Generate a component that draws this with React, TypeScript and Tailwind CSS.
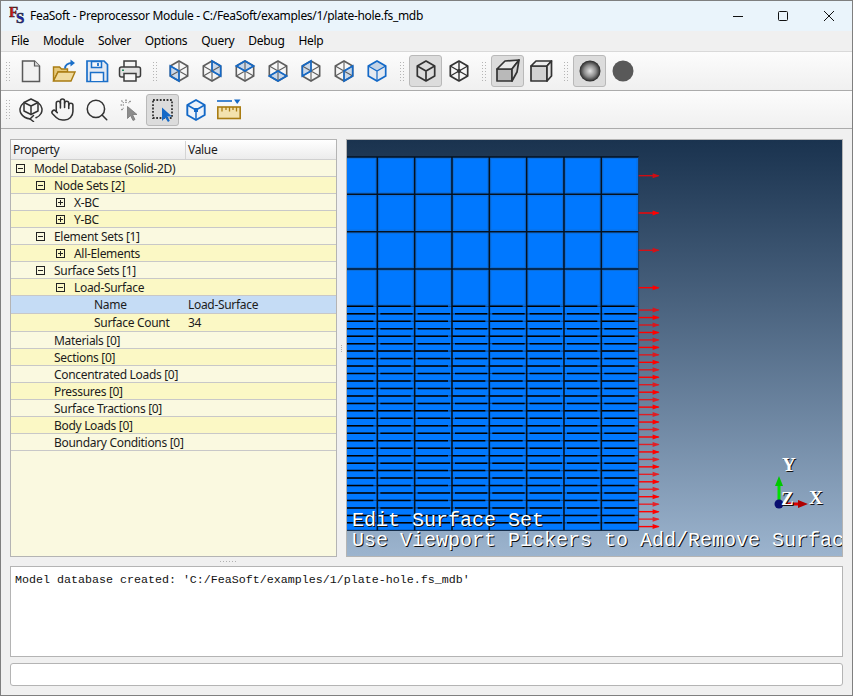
import type { ReactNode } from 'react'
import { Hand, Search } from 'lucide-react'

const UI_FONT = "font-['Noto_Sans','Liberation_Sans',sans-serif] tracking-[-0.31px]"

// hexagon corners of the view cube icons
const V: Record<string, string> = {
  t: '12,2',
  ur: '20.7,7',
  lr: '20.7,17',
  b: '12,22',
  ll: '3.3,17',
  ul: '3.3,7',
  c: '12,12',
}
const pts = (keys: string[]) => keys.map((k) => V[k]).join(' ')

const HEX_FACES = [
  ['c', 'ul', 'll', 'b'],
  ['t', 'ur', 'lr', 'c'],
  ['ul', 't', 'ur', 'c'],
  ['ll', 'b', 'lr', 'c'],
  ['ul', 't', 'c', 'll'],
  ['c', 'ur', 'lr', 'b'],
]

function HexIcon({ face }: { face: number }) {
  const outer = ['t', 'ur', 'lr', 'b', 'll', 'ul']
  if (face === 6) {
    return (
      <svg width="24" height="24" viewBox="0 0 24 24" fill="none">
        <polygon points={pts(outer)} fill="#e4e9f0" />
        <polygon points={pts(['ul', 't', 'ur', 'c'])} fill="#c3d3e6" />
        <polygon points={pts(outer)} stroke="#1469c7" strokeWidth="1.7" />
        <path d="M3.3 7 12 12 20.7 7M12 12v10" stroke="#1469c7" strokeWidth="1.2" />
      </svg>
    )
  }
  return (
    <svg width="24" height="24" viewBox="0 0 24 24" fill="none">
      <polygon points={pts(HEX_FACES[face])} fill="#c9d8ea" />
      <polygon points={pts(outer)} stroke="#5e5e5e" strokeWidth="1.6" />
      <path d="M12 2v20M3.3 7l17.4 10M20.7 7 3.3 17" stroke="#5e5e5e" strokeWidth="1.1" />
      <polygon points={pts(HEX_FACES[face])} stroke="#1469c7" strokeWidth="1.6" />
    </svg>
  )
}

function NewIcon() {
  return (
    <svg width="24" height="24" viewBox="0 0 24 24" fill="none">
      <path d="M3.5 2h12l5 5v15.5h-17z" fill="#f1f1f1" stroke="#595959" strokeWidth="1.5" />
      <path d="M15.5 2v5h5" fill="#dcdcdc" stroke="#595959" strokeWidth="1.2" />
    </svg>
  )
}

function OpenIcon() {
  return (
    <svg width="24" height="24" viewBox="0 0 24 24" fill="none">
      <path d="M1.5 22V8h6l2 2h6v3H6L1.5 22z" fill="#e6c878" stroke="#a97c12" strokeWidth="1.4" />
      <path d="M1.5 22 6 13h17l-4 9z" fill="#f0dba0" stroke="#a97c12" strokeWidth="1.4" />
      <path d="M13 9.5c0-3.5 3-5.5 7-5.5" stroke="#1a6fc9" strokeWidth="2" />
      <path d="M18.5 0.5 23 4l-4.5 3.5z" fill="#1a6fc9" />
    </svg>
  )
}

function SaveIcon() {
  return (
    <svg width="24" height="24" viewBox="0 0 24 24" fill="none">
      <path d="M2 2h17l3.5 3.5V22.5H2z" fill="#e3e9f2" stroke="#1a6fc9" strokeWidth="1.7" />
      <path d="M6.5 2.5h10v6h-10zM5.5 22v-8.5h13V22" fill="#f4f6fa" stroke="#1a6fc9" strokeWidth="1.5" />
      <path d="M13 4v3" stroke="#1a6fc9" strokeWidth="1.8" />
    </svg>
  )
}

function PrintIcon() {
  return (
    <svg width="24" height="24" viewBox="0 0 24 24" fill="none">
      <path d="M6 8V2h12v6" fill="#f4f4f4" stroke="#3d3d3d" strokeWidth="1.5" />
      <rect x="1.5" y="8" width="21" height="10" rx="2" fill="#e2e2e2" stroke="#3d3d3d" strokeWidth="1.5" />
      <rect x="6" y="14.5" width="12" height="7.5" fill="#f7f7f7" stroke="#3d3d3d" strokeWidth="1.5" />
      <rect x="4" y="10.5" width="2" height="1.5" fill="#1e8a5a" />
    </svg>
  )
}

function CubeIcon() {
  return (
    <svg width="24" height="24" viewBox="0 0 24 24" fill="none" stroke="#333" strokeWidth="1.7" strokeLinejoin="round">
      <polygon points={pts(['t', 'ur', 'lr', 'b', 'll', 'ul'])} />
      <path d="M3.3 7 12 12 20.7 7M12 12v10" />
    </svg>
  )
}

function WireIcon() {
  return (
    <svg width="24" height="24" viewBox="0 0 24 24" fill="none" stroke="#333" strokeWidth="1.7" strokeLinejoin="round">
      <polygon points={pts(['t', 'ur', 'lr', 'b', 'll', 'ul'])} />
      <path d="M12 2v20M3.3 7l17.4 10M20.7 7 3.3 17" strokeWidth="1.4" />
      <circle cx="12" cy="12" r="2" fill="#333" stroke="none" />
    </svg>
  )
}

function PerspectiveIcon() {
  return (
    <svg width="24" height="24" viewBox="0 0 24 24" fill="none" stroke="#333" strokeWidth="1.7" strokeLinejoin="round">
      <polygon points="1,10 16,10 16,22 1,22" fill="#b9b9b9" />
      <polygon points="1,10 9,2 23,1 16,10" fill="#e8e8e8" />
      <polygon points="16,10 23,1 21,13 16,22" fill="#d4d4d4" />
    </svg>
  )
}

function OrthoIcon() {
  return (
    <svg width="24" height="24" viewBox="0 0 24 24" fill="none" stroke="#333" strokeWidth="1.7" strokeLinejoin="round">
      <polygon points="2,7 18,7 18,22 2,22" fill="#d2d2d2" />
      <polygon points="2,7 7,2 22.5,2 18,7" fill="#ececec" />
      <polygon points="18,7 22.5,2 22.5,17 18,22" fill="#e2e2e2" />
    </svg>
  )
}

function ShadedIcon() {
  return (
    <svg width="24" height="24" viewBox="0 0 24 24">
      <defs>
        <radialGradient id="ball" cx="50%" cy="50%" r="52%">
          <stop offset="0%" stopColor="#e4e4e4" />
          <stop offset="55%" stopColor="#8a8a8a" />
          <stop offset="100%" stopColor="#1d1d1d" />
        </radialGradient>
      </defs>
      <circle cx="12" cy="12" r="10.5" fill="url(#ball)" />
    </svg>
  )
}

function FlatIcon() {
  return (
    <svg width="24" height="24" viewBox="0 0 24 24">
      <circle cx="12" cy="12" r="10.5" fill="#595959" />
    </svg>
  )
}

function RotateIcon() {
  return (
    <svg width="24" height="24" viewBox="0 0 24 24" fill="none" stroke="#333" strokeWidth="1.5" strokeLinejoin="round" strokeLinecap="round">
      <path d="M12 1 19 4.5v8.5l-7 3.5-7-3.5V4.5z" />
      <path d="M5 4.5l7 3.5 7-3.5M12 8v8.5" />
      <path d="M4 5.5C.8 8 .2 12.5 2 15.5c1.6 2.8 5 5 9.5 5.5" />
      <path d="M20 5.5c3.2 2.5 3.8 7 2 10-1 1.9-2.8 3.4-5 4.3" />
      <path d="M14.5 17.5 11 21l3.5 2.5" />
    </svg>
  )
}

function PickIcon() {
  return (
    <svg width="24" height="24" viewBox="0 0 24 24" fill="none">
      <path d="M9.5 8.5v12l3-3 2.5 5 2-1-2.5-5h4.5z" fill="#8c8c8c" stroke="#777" strokeWidth="0.8" />
      <path d="M8 1.5v3.5M2.5 7H6M12.5 3 10.5 5M3.5 2.5l2 2.5M3.5 12l2-2" stroke="#6e6e6e" strokeWidth="1.2" strokeDasharray="1.5 0.8" />
    </svg>
  )
}

function BoxSelectIcon() {
  return (
    <svg width="24" height="24" viewBox="0 0 24 24" fill="none">
      <rect x="2" y="2" width="19" height="18" stroke="#333" strokeWidth="1.8" strokeDasharray="1.8 1.6" />
      <path d="M11 9.5v13.5l3.2-3.2 2.8 4.2 1.8-1.2-2.5-4.2h4.7z" fill="#1469c7" />
    </svg>
  )
}

function SelCubeIcon() {
  return (
    <svg width="24" height="24" viewBox="0 0 24 24" fill="none" stroke="#1469c7" strokeWidth="1.9" strokeLinejoin="round">
      <polygon points={pts(['t', 'ur', 'lr', 'b', 'll', 'ul'])} fill="#eef3fa" />
      <path d="M3.3 7 12 12 20.7 7M12 12v10" strokeWidth="1.5" />
      <rect x="10" y="10" width="4" height="4" fill="#1469c7" stroke="none" />
    </svg>
  )
}

function RulerIcon() {
  return (
    <svg width="24" height="24" viewBox="0 0 24 24" fill="none">
      <path d="M0 3h15" stroke="#1469c7" strokeWidth="1.6" />
      <path d="M17 1.5h6.5L20.2 6z" fill="#1469c7" />
      <rect x="0.8" y="9" width="22.4" height="11.5" fill="#f3e2ae" stroke="#a97c12" strokeWidth="1.6" />
      <path d="M5 9v4.5M9 9v3M12.5 9v4.5M16 9v3M19.5 9v4.5" stroke="#a97c12" strokeWidth="1.3" />
    </svg>
  )
}

function Grip({ first }: { first?: boolean }) {
  const dots = [0, 1, 2, 3, 4, 5, 6]
  return (
    <div className={first ? 'flex h-full w-[13px] items-center gap-[2px] pl-[5px]' : 'flex h-full w-[16px] items-center gap-[2px] pl-[7px]'}>
      {[0, 1].map((col) => (
        <div key={col} className="flex flex-col gap-[2px]">
          {dots.map((d) => (
            <div key={d} className="h-px w-px bg-[#b5b5b5]" />
          ))}
        </div>
      ))}
    </div>
  )
}

function ToolButton({ children, active }: { children: ReactNode; active?: boolean }) {
  return (
    <div
      className={
        active
          ? 'flex h-[32px] w-[33px] items-center justify-center rounded-[3px] border border-[#b9b9b9] bg-[#dcdcdc]'
          : 'flex h-[32px] w-[33px] items-center justify-center'
      }
    >
      {children}
    </div>
  )
}

function Toolbar({ children, height }: { children: ReactNode; height: string }) {
  return (
    <div className={`flex shrink-0 items-center border-b border-[#ababab] bg-linear-to-b from-[#fcfcfc] to-[#f0f0f0] ${height}`}>
      {children}
    </div>
  )
}

function Expander({ open }: { open: boolean }) {
  return (
    <svg width="9" height="9" viewBox="0 0 9 9" className="shrink-0">
      <rect x="0.5" y="0.5" width="8" height="8" fill="none" stroke="#222" />
      <path d={open ? 'M2 4.5h5' : 'M2 4.5h5M4.5 2v5'} stroke="#222" />
    </svg>
  )
}

type TreeRow = {
  label: string
  level: number
  open?: boolean
  value?: string
  tall?: boolean
  selected?: boolean
}

const ROWS: TreeRow[] = [
  { label: 'Model Database (Solid-2D)', level: 0, open: true },
  { label: 'Node Sets [2]', level: 1, open: true },
  { label: 'X-BC', level: 2, open: false },
  { label: 'Y-BC', level: 2, open: false },
  { label: 'Element Sets [1]', level: 1, open: true },
  { label: 'All-Elements', level: 2, open: false },
  { label: 'Surface Sets [1]', level: 1, open: true },
  { label: 'Load-Surface', level: 2, open: true },
  { label: 'Name', level: 3, value: 'Load-Surface', tall: true, selected: true },
  { label: 'Surface Count', level: 3, value: '34', tall: true },
  { label: 'Materials [0]', level: 1 },
  { label: 'Sections [0]', level: 1 },
  { label: 'Concentrated Loads [0]', level: 1 },
  { label: 'Pressures [0]', level: 1 },
  { label: 'Surface Tractions [0]', level: 1 },
  { label: 'Body Loads [0]', level: 1 },
  { label: 'Boundary Conditions [0]', level: 1 },
]

const LEVEL_PAD = ['pl-[23px]', 'pl-[43px]', 'pl-[63px]', 'pl-[83px]']
const BOX_PAD = ['pl-[5px]', 'pl-[25px]', 'pl-[45px]', 'pl-[65px]']

function PropertyTree() {
  return (
    <div className="flex h-full w-[327px] shrink-0 flex-col border border-[#b4b4b4] bg-[#faf9e0] text-[12px] text-[#1c1c1c]">
      <div className="flex h-[20px] shrink-0 items-center border-b border-[#d0d0d0] bg-linear-to-b from-white to-[#ececec] pt-[1px]">
        <div className="w-[175px] border-r border-[#d4d4d4] pl-[2px]">Property</div>
        <div className="pl-[2px]">Value</div>
      </div>
      {ROWS.map((row, i) => {
        const tone = row.selected ? 'bg-[#c5dcf5]' : i % 2 === 1 ? 'bg-[#fbf8c5]' : 'bg-[#faf9e0]'
        return (
          <div
            key={row.label}
            className={`relative flex shrink-0 items-center border-b border-[#c8c8c8] pt-[1px] ${row.tall ? 'h-[18px]' : 'h-[17px]'} ${tone}`}
          >
            {row.open !== undefined && (
              <div className={`absolute left-0 top-[4px] flex ${BOX_PAD[row.level]}`}>
                <Expander open={row.open} />
              </div>
            )}
            <div className={`w-[176px] shrink-0 whitespace-nowrap ${LEVEL_PAD[row.level]}`}>{row.label}</div>
            {row.value && <div className="pl-[1px]">{row.value}</div>}
          </div>
        )
      })}
    </div>
  )
}

// mesh coordinates are relative to the viewport's inner box at (347, 140)
const MESH_X0 = 340 - 347
const COL = 37.33
const BIG = 37.33
const THIN = 7.467
const MESH_Y0 = 157 - 140

function MeshView() {
  const cells: { y: number; h: number; thin: boolean }[] = []
  for (let i = 0; i < 4; i++) cells.push({ y: MESH_Y0 + i * BIG, h: BIG, thin: false })
  const thinStart = MESH_Y0 + 4 * BIG
  for (let i = 0; i < 30; i++) cells.push({ y: thinStart + i * THIN, h: THIN, thin: true })
  const bottom = thinStart + 30 * THIN
  const right = MESH_X0 + 8 * COL

  return (
    <svg width="495" height="416" className="absolute left-0 top-0">
      <rect x={MESH_X0} y={MESH_Y0} width={right - MESH_X0} height={bottom - MESH_Y0} fill="#0078ff" />
      {cells
        .filter((c) => !c.thin)
        .map((c, r) =>
          Array.from({ length: 8 }, (_, k) => (
            <rect
              key={`${r}-${k}`}
              x={MESH_X0 + k * COL + 1.5}
              y={c.y + 1.5}
              width={COL - 3}
              height={c.h - 3}
              fill="none"
              stroke="#0d6cd6"
              strokeWidth="1"
            />
          ))
        )}
      {cells
        .filter((c) => !c.thin)
        .map((c, r) => (
          <line key={r} x1={MESH_X0} x2={right} y1={c.y} y2={c.y} stroke="#06121f" strokeWidth="1.5" />
        ))}
      {/* thin rows: every other line stops short of the element edges */}
      {cells
        .filter((c) => c.thin)
        .map((c, r) =>
          Array.from({ length: 8 }, (_, k) => {
            const x = MESH_X0 + k * COL
            return (
              <g key={`${r}-${k}`}>
                <line x1={x} x2={x + COL} y1={c.y} y2={c.y} stroke="#0b4f9e" strokeWidth="1.2" />
                <line
                  x1={r % 2 === 0 ? x : x + 3}
                  x2={r % 2 === 0 ? x + COL - 4 : x + COL - 2}
                  y1={c.y}
                  y2={c.y}
                  stroke="#000"
                  strokeWidth="1.5"
                />
              </g>
            )
          })
        )}
      <line x1={MESH_X0} x2={right} y1={bottom} y2={bottom} stroke="#07192e" strokeWidth="1" />
      {Array.from({ length: 8 }, (_, k) => (
        <line
          key={k}
          x1={MESH_X0 + (k + 1) * COL}
          x2={MESH_X0 + (k + 1) * COL}
          y1={MESH_Y0}
          y2={bottom}
          stroke={k === 7 ? '#1c3a5c' : '#06121f'}
          strokeWidth={k === 7 ? 1 : 1.6}
        />
      ))}
      {cells.map((c, r) => {
        const y = c.y + c.h / 2
        const ax = right
        return (
          <g key={r} opacity={r % 2 === 1 ? 1 : 0.78}>
            <line x1={ax} x2={ax + 20} y1={y} y2={y} stroke="#ff0000" strokeWidth="1.4" />
            <polygon points={`${ax + 14},${y - 2.5} ${ax + 21},${y} ${ax + 14},${y + 2.5}`} fill="#ff0000" />
          </g>
        )
      })}
      {/* axis triad */}
      <line x1="432" x2="432" y1="364" y2="342" stroke="#00e000" strokeWidth="3" />
      <polygon points="432,336 428,346 436,346" fill="#00c800" />
      <line x1="432" x2="454" y1="364" y2="364" stroke="#e00000" strokeWidth="3" />
      <polygon points="461,364 451,360 451,368" fill="#b00000" />
      <circle cx="432" cy="364" r="4.5" fill="#0a0f70" />
    </svg>
  )
}

const OVERLAY = "font-['Liberation_Mono',monospace] tracking-normal text-white [text-shadow:1px_1px_0_#111]"
const AXIS_LABEL = "font-['Liberation_Serif',serif] tracking-normal text-white [text-shadow:1px_1px_0_#111]"

export default function App() {
  return (
    <div className={`flex h-[696px] w-[853px] flex-col overflow-hidden border border-[#7f7f7f] bg-[#f0f0f0] text-black ${UI_FONT}`}>
      {/* title bar */}
      <div className="flex h-[30px] shrink-0 items-center bg-[#eaf4fb] text-[12px]">
        <div className="ml-[8px] flex h-[20px] w-[21px] shrink-0">
          <svg width="20" height="20" viewBox="0 0 20 20">
            <text x="0" y="11" fontFamily="Liberation Serif, serif" fontWeight="700" fontSize="15" fill="#d81818" stroke="#222" strokeWidth="0.5">F</text>
            <text x="7" y="17" fontFamily="Liberation Serif, serif" fontWeight="700" fontSize="15" fill="#1826b8" stroke="#222" strokeWidth="0.5">S</text>
          </svg>
        </div>
        <span className="whitespace-nowrap">FeaSoft - Preprocessor Module - C:/FeaSoft/examples/1/plate-hole.fs_mdb</span>
        <div className="ml-auto flex items-center">
          <svg width="46" height="12" viewBox="0 0 46 12" className="mr-[-1px]">
            <path d="M18 6.5h10" stroke="#111" strokeWidth="1" />
          </svg>
          <svg width="46" height="12" viewBox="0 0 46 12">
            <rect x="18.5" y="1.5" width="9" height="9" rx="1" fill="none" stroke="#111" />
          </svg>
          <svg width="46" height="12" viewBox="0 0 46 12">
            <path d="M18 1l10 10M28 1 18 11" stroke="#111" strokeWidth="1" />
          </svg>
        </div>
      </div>

      {/* menu bar */}
      <div className="flex h-[21px] shrink-0 items-center gap-[14px] border-b border-[#d9d9d9] pl-[10px] text-[12px]">
        {['File', 'Module', 'Solver', 'Options', 'Query', 'Debug', 'Help'].map((m) => (
          <span key={m}>{m}</span>
        ))}
      </div>

      <Toolbar height="h-[39px]">
        <Grip first />
        <ToolButton><NewIcon /></ToolButton>
        <ToolButton><OpenIcon /></ToolButton>
        <ToolButton><SaveIcon /></ToolButton>
        <ToolButton><PrintIcon /></ToolButton>
        <Grip />
        {[0, 1, 2, 3, 4, 5, 6].map((f) => (
          <ToolButton key={f}><HexIcon face={f} /></ToolButton>
        ))}
        <Grip />
        <ToolButton active><CubeIcon /></ToolButton>
        <ToolButton><WireIcon /></ToolButton>
        <Grip />
        <ToolButton active><PerspectiveIcon /></ToolButton>
        <ToolButton><OrthoIcon /></ToolButton>
        <Grip />
        <ToolButton active><ShadedIcon /></ToolButton>
        <ToolButton><FlatIcon /></ToolButton>
      </Toolbar>

      <Toolbar height="h-[38px]">
        <Grip first />
        <ToolButton><RotateIcon /></ToolButton>
        <ToolButton><Hand size={25} strokeWidth={1.5} color="#333" className="-ml-[2px]" /></ToolButton>
        <ToolButton><Search size={26} strokeWidth={1.4} color="#333" /></ToolButton>
        <ToolButton><PickIcon /></ToolButton>
        <ToolButton active><BoxSelectIcon /></ToolButton>
        <ToolButton><SelCubeIcon /></ToolButton>
        <ToolButton><RulerIcon /></ToolButton>
      </Toolbar>

      {/* main area */}
      <div className="flex min-h-0 flex-1 flex-col px-[9px] pt-[10px] pb-[9px]">
        <div className="flex h-[418px] shrink-0">
          <PropertyTree />
          <div className="flex w-[9px] shrink-0 flex-col items-center justify-center gap-[1px]">
            {[0, 1, 2, 3].map((d) => (
              <div key={d} className="h-px w-px bg-[#b0b0b0]" />
            ))}
          </div>
          <div className="relative h-[418px] w-[497px] shrink-0 overflow-hidden border border-[#b4b4b4] bg-linear-to-b from-[#1a334f] to-[#9cb4ce]">
            <MeshView />
            <div className={`absolute left-[5px] top-[371px] whitespace-nowrap text-[20px] leading-[20px] ${OVERLAY}`}>
              <div>Edit Surface Set</div>
              <div>Use Viewport Pickers to Add/Remove Surface</div>
            </div>
            <span className={`absolute left-[435px] top-[315px] text-[19px] leading-[20px] font-bold ${AXIS_LABEL}`}>Y</span>
            <span className={`absolute left-[434px] top-[349px] text-[19px] leading-[20px] font-bold ${AXIS_LABEL}`}>Z</span>
            <span className={`absolute left-[462px] top-[348px] text-[19px] leading-[20px] font-bold ${AXIS_LABEL}`}>X</span>
          </div>
        </div>

        {/* splitter */}
        <div className="flex h-[9px] shrink-0 items-center justify-center gap-[2px] pl-[2px] pr-[400px]">
          {[0, 1, 2, 3, 4, 5].map((d) => (
            <div key={d} className="h-px w-px bg-[#b0b0b0]" />
          ))}
        </div>

        <div className="h-[91px] shrink-0 border border-[#b4b4b4] bg-white pl-[4px] pt-[6px] font-['Liberation_Mono',monospace] text-[11.67px] leading-[14px] tracking-normal whitespace-nowrap text-[#111]">
          Model database created: 'C:/FeaSoft/examples/1/plate-hole.fs_mdb'
        </div>
        <div className="mt-[6px] h-[23px] shrink-0 rounded-[3px] border border-[#b4b4b4] bg-white" />
      </div>
    </div>
  )
}
